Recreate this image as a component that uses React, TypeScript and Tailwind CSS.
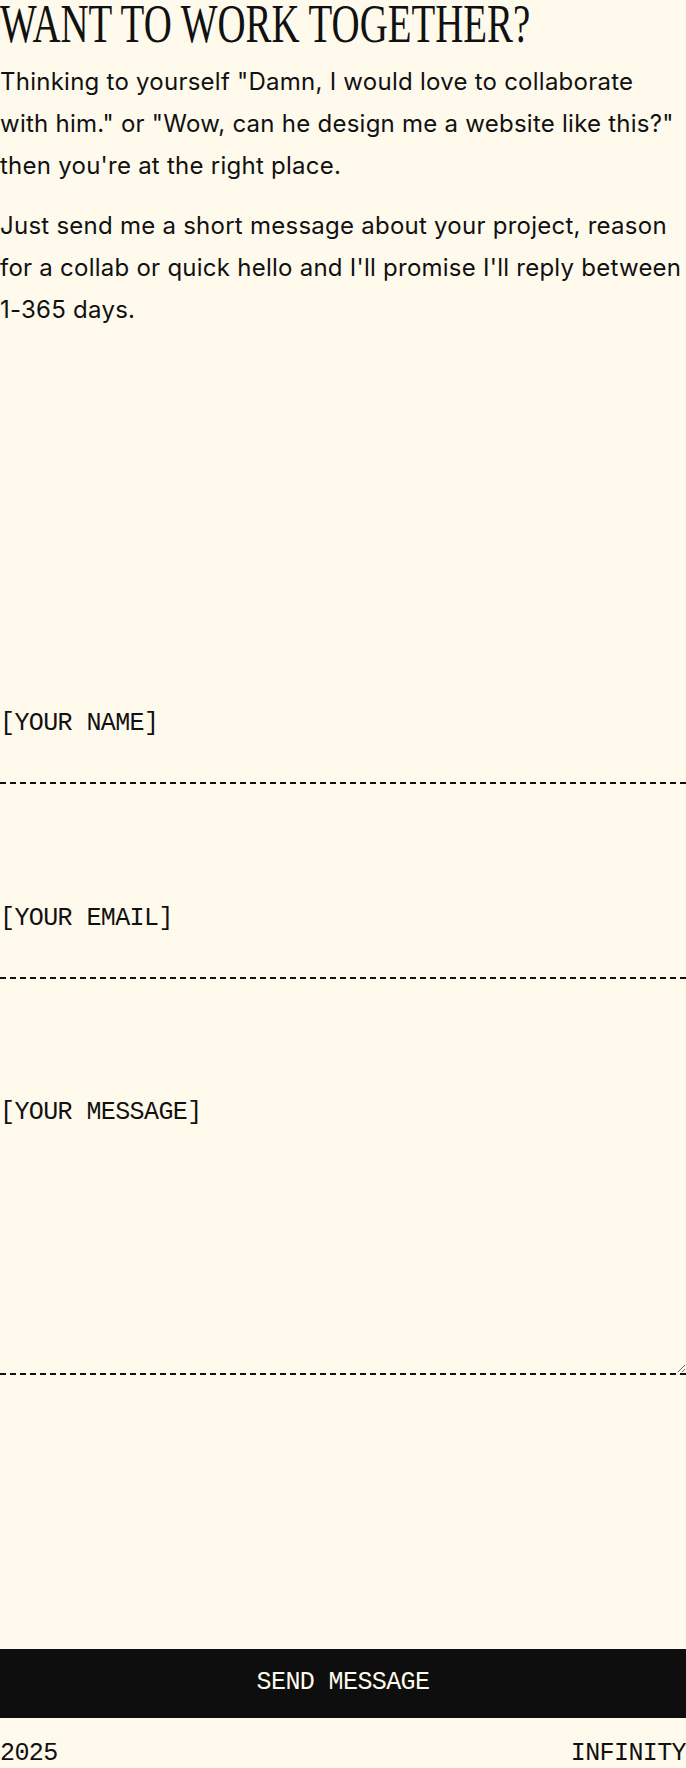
import React from 'react';

const App = () => {
  const mono = "font-['Liberation_Mono',monospace] text-[25px] tracking-[-0.6px]";

  return (
    <div className="min-h-[1768px] bg-[#fffaec] text-[#111]">
      <section>
        <h1 className="w-max font-['Liberation_Serif',serif] text-[54px] leading-[0.9] whitespace-nowrap origin-left scale-x-[0.72]">
          WANT TO WORK TOGETHER?
        </h1>
        <div className="mt-3 font-['Inter',sans-serif] text-[24px] leading-[42px] tracking-[0.25px]">
          <p>
            Thinking to yourself "Damn, I would love to collaborate with him."
            or "Wow, can he design me a website like this?" then you're at the
            right place.
          </p>
          <p className="mt-[18px]">
            Just send me a short message about your project, reason for a
            collab or quick hello and I'll promise I'll reply between 1-365
            days.
          </p>
        </div>
      </section>

      {/* contact form */}
      <form className="mt-[332px] flex flex-col" onSubmit={(e) => e.preventDefault()}>
        <input
          type="text"
          placeholder="[YOUR NAME]"
          className={`${mono} w-full h-[121px] pt-[47px] pb-[45px] leading-[28px] bg-transparent border-b-2 border-dashed border-[#111] outline-none placeholder:text-[#111]`}
        />
        <input
          type="email"
          placeholder="[YOUR EMAIL]"
          className={`${mono} mt-[74px] w-full h-[121px] pt-[47px] pb-[45px] leading-[28px] bg-transparent border-b-2 border-dashed border-[#111] outline-none placeholder:text-[#111]`}
        />
        <textarea
          placeholder="[YOUR MESSAGE]"
          className={`${mono} mt-[73px] w-full h-[323px] pt-[47px] leading-[28px] bg-transparent border-b-2 border-dashed border-[#111] outline-none placeholder:text-[#111]`}
        />
        <button
          type="submit"
          className={`${mono} mt-[274px] w-full h-[69px] flex items-center justify-center bg-[#0e0e0e] text-[#fffaec]`}
        >
          SEND MESSAGE
        </button>
      </form>

      <footer className={`${mono} mt-[22px] flex justify-between leading-[28px]`}>
        <span>2025</span>
        <span>INFINITY</span>
      </footer>
    </div>
  );
};

export default App;
